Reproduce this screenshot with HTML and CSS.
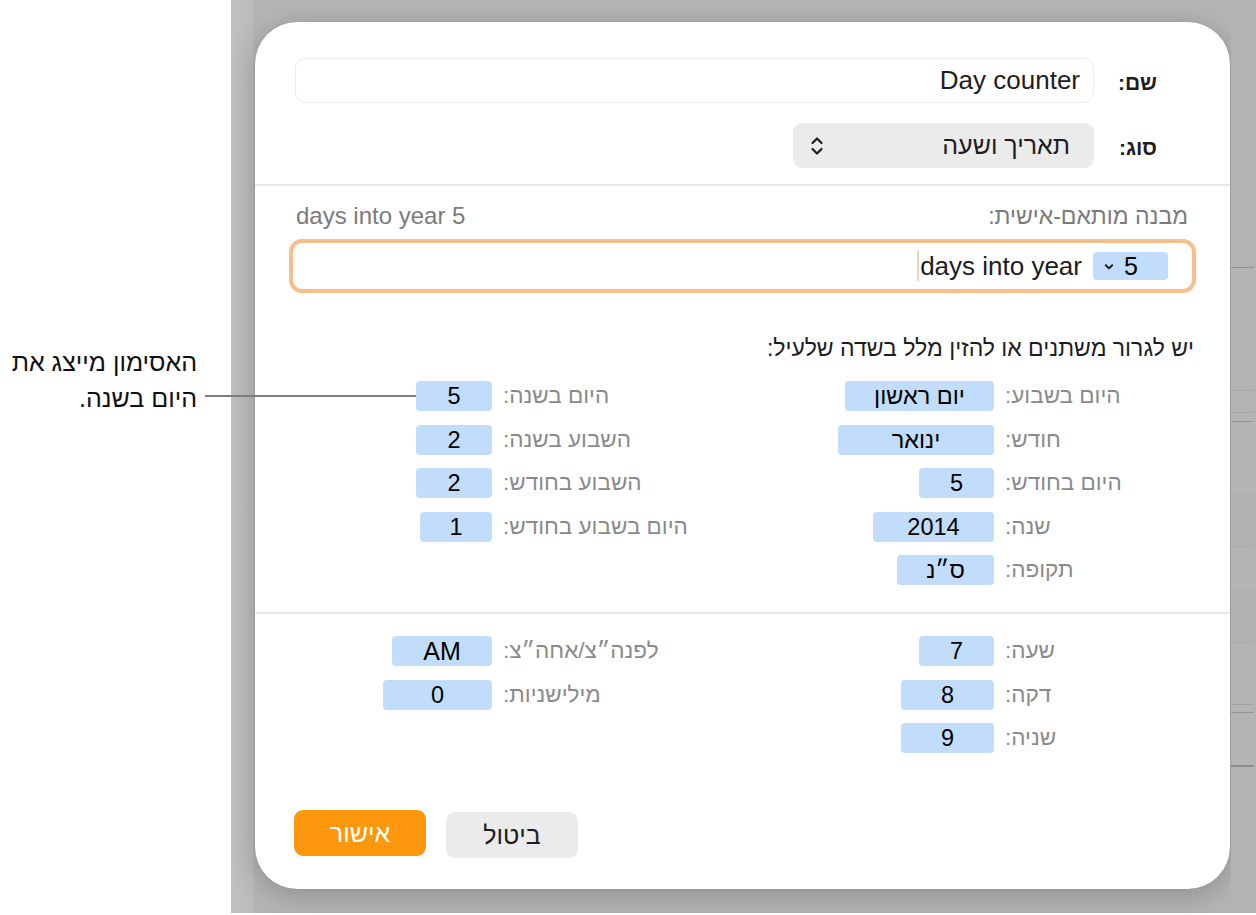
FILE: index.html
```html
<!DOCTYPE html>
<html lang="he">
<head>
<meta charset="utf-8">
<title>Day counter</title>
<link rel="stylesheet" href="styles.css">
</head>
<body>
<div class="page">
  <aside class="callout-panel">
    <p class="callout-text" dir="rtl">האסימון מייצג את<br>היום בשנה.</p>
  </aside>
  <div class="callout-line"></div>
  <div class="desk">
    <div class="strip-left"></div>
    <div class="dialog-col">
      <div class="dialog" dir="rtl">
        <section class="top">
          <div class="frow">
            <span class="flabel">שם:</span>
            <div class="text-field">Day counter</div>
          </div>
          <div class="frow">
            <span class="flabel">סוג:</span>
            <div class="select">
              <span class="select-text">תאריך ושעה</span>
              <svg class="updown" width="14" height="22" viewBox="0 0 14 22"><path d="M2.5 8 L7 3.5 L11.5 8 M2.5 14 L7 18.5 L11.5 14" fill="none" stroke="#1d1d1f" stroke-width="2.2" stroke-linecap="round" stroke-linejoin="round"/></svg>
            </div>
          </div>
        </section>
        <hr class="divider">
        <section class="format">
          <div class="format-head">
            <span class="muted">מבנה מותאם-אישית:</span>
            <span class="muted muted-latin" dir="ltr">days into year 5</span>
          </div>
          <div class="format-field">
            <span class="token token-drop"><span class="tk-val">5</span><svg class="chev" width="10" height="8" viewBox="0 0 10 8"><path d="M1.8 2.2 L5 5.4 L8.2 2.2" fill="none" stroke="#1d1d1f" stroke-width="2" stroke-linecap="round" stroke-linejoin="round"/></svg></span>
            <span class="field-text" dir="ltr">days into year</span>
            <span class="caret"></span>
          </div>
          <p class="hint">יש לגרור משתנים או להזין מלל בשדה שלעיל:</p>
          <div class="vars">
            <div class="group group-right">
              <span class="vlabel">היום בשבוע:</span><span class="token" style="width:149px">יום ראשון</span>
              <span class="vlabel">חודש:</span><span class="token" style="width:156px">ינואר</span>
              <span class="vlabel">היום בחודש:</span><span class="token" style="width:75px">5</span>
              <span class="vlabel">שנה:</span><span class="token" style="width:121px">2014</span>
              <span class="vlabel">תקופה:</span><span class="token" style="width:97px">ס״נ</span>
            </div>
            <div class="group group-left">
              <span class="vlabel">היום בשנה:</span><span class="token" style="width:76px">5</span>
              <span class="vlabel">השבוע בשנה:</span><span class="token" style="width:76px">2</span>
              <span class="vlabel">השבוע בחודש:</span><span class="token" style="width:76px">2</span>
              <span class="vlabel">היום בשבוע בחודש:</span><span class="token" style="width:72px">1</span>
            </div>
          </div>
        </section>
        <hr class="divider">
        <section class="time">
          <div class="vars">
            <div class="group group-right">
              <span class="vlabel">שעה:</span><span class="token" style="width:75px">7</span>
              <span class="vlabel">דקה:</span><span class="token" style="width:93px">8</span>
              <span class="vlabel">שניה:</span><span class="token" style="width:93px">9</span>
            </div>
            <div class="group group-left">
              <span class="vlabel">לפנה״צ/אחה״צ:</span><span class="token token-latin" style="width:100px">AM</span>
              <span class="vlabel">מילישניות:</span><span class="token" style="width:109px">0</span>
            </div>
          </div>
        </section>
        <div class="buttons">
          <button class="btn btn-cancel">ביטול</button>
          <button class="btn btn-ok">אישור</button>
        </div>
      </div>
    </div>
    <div class="strip-right"></div>
  </div>
</div>
</body>
</html>
```

FILE: styles.css
```css
* { box-sizing: border-box; }

html, body {
  margin: 0;
  padding: 0;
  background: #ffffff;
}

body {
  font-family: "Liberation Sans", Arial, "DejaVu Sans", sans-serif;
  color: #1d1d1f;
  width: 1256px;
  height: 915px;
  overflow: hidden;
}

.page {
  position: relative;
  display: flex;
  width: 1256px;
  height: 913px;
}

/* ---------- left callout ---------- */
.callout-panel {
  width: 231px;
  flex: none;
  background: #ffffff;
  padding: 344px 34px 0 0;
}

.callout-text {
  margin: 0;
  font-size: 25px;
  line-height: 36px;
  text-align: right;
  color: #111;
}

.callout-line {
  position: absolute;
  left: 205px;
  top: 395px;
  width: 211px;
  height: 2px;
  background: #7d7d7d;
  z-index: 5;
}

/* ---------- grey desk ---------- */
.desk {
  flex: 1;
  display: flex;
  background: #b5b5b5;
}

.strip-left {
  width: 24px;
  flex: none;
  background: linear-gradient(90deg, #c0c0c0 0, #bcbcbc 22px, #b3b3b3 23px, #b8b8b8 24px);
}

.strip-right {
  width: 23px;
  flex: none;
  margin-right: 2px;
  background:
    linear-gradient(#8f8f8f, #8f8f8f) 0 267px / 100% 1px no-repeat,
    linear-gradient(#a6a6a6, #a6a6a6) 0 390px / 100% 1px no-repeat,
    linear-gradient(#a6a6a6, #a6a6a6) 0 412px / 100% 1px no-repeat,
    linear-gradient(#939393, #939393) 0 421px / 100% 1px no-repeat,
    linear-gradient(#ababab, #ababab) 0 494px / 100% 1px no-repeat,
    linear-gradient(#ababab, #ababab) 0 546px / 100% 1px no-repeat,
    linear-gradient(#ababab, #ababab) 0 590px / 100% 1px no-repeat,
    linear-gradient(#ababab, #ababab) 0 642px / 100% 1px no-repeat,
    linear-gradient(#a0a0a0, #a0a0a0) 0 704px / 100% 1px no-repeat,
    linear-gradient(#959595, #959595) 0 712px / 100% 1px no-repeat,
    linear-gradient(#8c8c8c, #8c8c8c) 0 765px / 100% 2px no-repeat,
    linear-gradient(#b0b3b2, #b0b3b2) 0 494px / 100% 52px no-repeat,
    linear-gradient(#b0b3b2, #b0b3b2) 0 590px / 100% 52px no-repeat,
    #b4b4b4;
}

.dialog-col {
  flex: 1;
  padding-top: 22px;
}

.dialog {
  width: 975px;
  height: 867px;
  background: #ffffff;
  border-radius: 42px;
  box-shadow: 0 6px 30px rgba(0, 0, 0, 0.22), 0 0 1px rgba(0, 0, 0, 0.25);
  display: flex;
  flex-direction: column;
}

/* ---------- top section ---------- */
.top {
  padding: 36px 73px 16px 40px;
  display: flex;
  flex-direction: column;
  gap: 20px;
}

.frow {
  display: flex;
  align-items: center;
  gap: 22px;
}

.flabel {
  width: 41px;
  flex: none;
  font-size: 21px;
  font-weight: bold;
  color: #1d1d1f;
  text-align: right;
  padding-top: 4px;
}

.text-field {
  flex: 1;
  height: 45px;
  border: 1.5px solid #ececec;
  border-radius: 10px;
  font-size: 26px;
  line-height: 42px;
  padding-right: 13px;
  color: #1d1d1f;
  text-align: right;
}

.select {
  width: 301px;
  height: 45px;
  background: #ebebeb;
  border-radius: 9px;
  display: flex;
  align-items: center;
  justify-content: space-between;
  padding: 0 24px 0 17px;
}

.select-text {
  font-size: 25px;
  color: #1d1d1f;
}

.updown { display: block; }

.divider {
  margin: 0;
  border: 0;
  height: 2px;
  background: #e8e8e8;
}

/* ---------- format section ---------- */
.format {
  padding: 18px 34px 0 34px;
}

.format-head {
  display: flex;
  justify-content: space-between;
  align-items: center;
  padding: 0 8px 0 0;
  height: 24px;
}

.format-head .muted-latin { padding-left: 7px; font-size: 24px; }

.muted {
  font-size: 23px;
  color: #7b7b7b;
}

.format-field {
  margin-top: 11px;
  height: 54px;
  border: 4px solid #f6bf8e;
  border-radius: 13px;
  display: flex;
  align-items: center;
  padding-right: 24px;
  gap: 11px;
}

.token {
  height: 30px;
  background: #c1ddfb;
  border-radius: 4px;
  font-size: 23.5px;
  line-height: 30px;
  color: #000;
  text-align: center;
  justify-self: start;
}

.token-latin { font-size: 25px; }

.token-drop {
  width: 75px;
  height: 28px;
  display: flex;
  align-items: center;
  padding-right: 30px;
  gap: 10px;
  line-height: 28px;
  font-size: 25px;
}

.chev { display: block; margin-top: 2px; }

.field-text {
  font-size: 26px;
  color: #1d1d1f;
  margin-top: 1px;
}

.caret {
  width: 2px;
  height: 30px;
  background: #f7d3ac;
  margin-right: -10px;
}

.hint {
  margin: 42px 0 0;
  padding-right: 2px;
  font-size: 23px;
  line-height: 26px;
  color: #1d1d1f;
}

/* ---------- variable grids ---------- */
.vars {
  display: flex;
  margin-top: 20px;
  padding-right: 66px;
  margin-bottom: 27px;
}

.group {
  display: grid;
  column-gap: 11px;
  row-gap: 13.5px;
  align-items: center;
  align-content: start;
}

.group-right { grid-template-columns: 125px 292px; }
.group-left { grid-template-columns: 199px 120px; }

.vlabel {
  font-size: 22.5px;
  color: #8a8a8a;
  text-align: left;
  white-space: nowrap;
  line-height: 26px;
}

.time { padding: 0 34px; }

.time .vars { margin-top: 22px; margin-bottom: 0; }

/* ---------- buttons ---------- */
.buttons {
  margin-top: auto;
  padding: 0 39px 31px;
  display: flex;
  justify-content: flex-end;
  align-items: flex-start;
  gap: 20px;
}

.btn {
  font-family: inherit;
  font-size: 25px;
  border: 0;
  width: 132px;
  height: 46px;
  border-radius: 9px;
  padding: 0;
}

.btn-cancel {
  background: #ebebeb;
  color: #1d1d1f;
  margin-top: 2px;
}

.btn-ok {
  background: #fd970d;
  color: #ffffff;
}
```
